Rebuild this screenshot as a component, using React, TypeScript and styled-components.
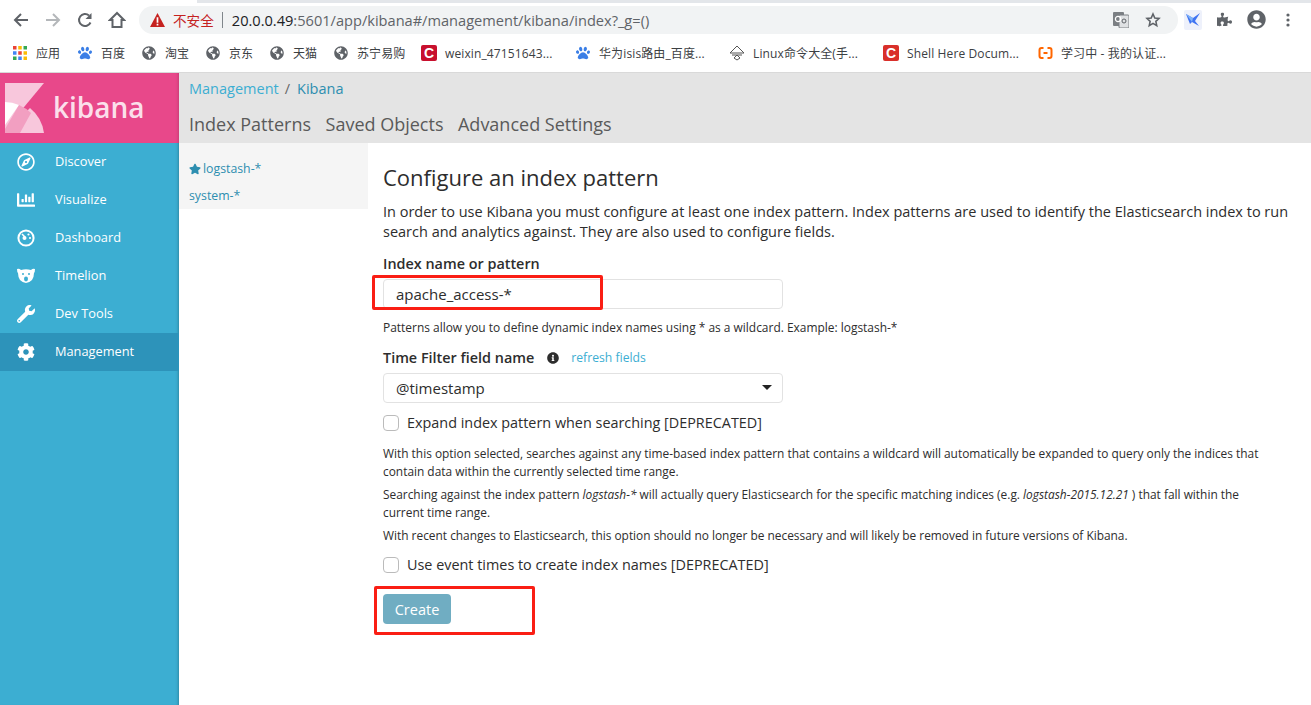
import React from "react";
import styled, { createGlobalStyle } from "styled-components";
import { FaRegCompass, FaChartBar, FaWrench, FaCog, FaStar, FaInfoCircle, FaPaw, FaGlobeAmericas, FaPuzzlePiece, FaUserCircle } from "react-icons/fa";

const Global = createGlobalStyle`
  html, body { margin: 0; padding: 0; background: #fff; overflow: hidden; }
  body { font-family: "Open Sans", "Noto Sans CJK SC", sans-serif; }
  * { box-sizing: border-box; }
`;
const Page = styled.div`width: 1311px; height: 705px; display: flex; flex-direction: column; overflow: hidden; position: relative;`;
const TabStrip = styled.div`height: 3px; background: #e3e6ea; display: flex;`;
const ActiveTab = styled.div`width: 197px; background: #fff;`;
const Toolbar = styled.div`height: 33px; display: flex; align-items: center; padding-left: 5px; background: #fff;`;
const NavBtn = styled.div<{ $w?: number }>`width: ${p => p.$w ?? 32}px; height: 24px; display: flex; align-items: center; justify-content: center; flex: none;`;
const Nav = styled.div`display: flex; width: 134px; flex: none;`;
const Omni = styled.div`width: 1039px; height: 28px; border-radius: 14px; background: #f1f3f4; display: flex; align-items: center; padding-left: 11px; flex: none; margin-top: 1px;`;
const Warn = styled.span`color: #c5221f; font-size: 13.6px; margin-left: 8px; font-family: "Noto Sans CJK SC", sans-serif; white-space: nowrap;`;
const Divider = styled.span`width: 1px; height: 16px; background: #80868b; margin: 0 9px 0 8px;`;
const Url = styled.span`font-size: 14.6px; color: #5f6368; white-space: nowrap; font-family: "Open Sans", sans-serif;`;
const UrlHost = styled.span`color: #202124;`;
const OmniRight = styled.div`margin-left: auto; display: flex; align-items: center; gap: 16px; padding-right: 17px;`;
const Tools = styled.div`display: flex; align-items: center; padding-left: 6px; gap: 15px;`;
const Bookmarks = styled.div`height: 37px; display: flex; align-items: center; padding: 0 0 2px 12px; background: #fff; border-bottom: 1px solid #d9d9d9;`;
const Bookmark = styled.div<{ $w: number }>`width: ${p => p.$w}px; flex: none; display: flex; align-items: center; gap: 8px; font-size: 12px; letter-spacing: .12px; color: #3c4043; white-space: nowrap; font-family: "Open Sans", "Noto Sans CJK SC", sans-serif;`;
const BmIcon = styled.span`width: 16px; height: 16px; display: flex; align-items: center; justify-content: center; flex: none;`;
const Tile = styled.span<{ $c: string }>`width: 16px; height: 16px; background: ${p => p.$c}; color: #fff; border-radius: 2px; font: bold 14px/16px "Liberation Sans", sans-serif; text-align: center;`;

const AppBody = styled.div`flex: 1; display: flex; min-height: 0;`;
const Sidebar = styled.aside`width: 179px; flex: none; background: #3caed2; display: flex; flex-direction: column; box-shadow: inset -3px 0 3px -2px rgba(0,0,0,.22);`;
const Logo = styled.div`height: 70px; background: #e8488a; display: flex; align-items: center; padding: 0 0 2px 5px; gap: 9px; color: #fbdfeb; font-size: 28px; font-weight: 600; box-shadow: inset -3px 0 3px -2px rgba(0,0,0,.15);`;
const LogoMark = styled.span`display: flex; margin-top: 2px;`;
const NavItem = styled.div<{ $active?: boolean }>`height: 38px; display: flex; align-items: center; padding: 0 0 2px 17px; gap: 20px; color: #fff; font-size: 12.8px; background: ${p => p.$active ? "#2d93ba" : "transparent"};`;
const NavGlyph = styled.span`width: 18px; height: 18px; display: flex; align-items: center; justify-content: center; flex: none; font-size: 18px; margin-top: 2px;`;

const Main = styled.main`flex: 1; display: flex; flex-direction: column; min-width: 0;`;
const TopBar = styled.div`height: 70px; background: #e4e4e4; padding: 6px 10px 0; display: flex; flex-direction: column;`;
const Crumbs = styled.div`font-size: 14.5px; line-height: 20px; color: #3caed2; display: flex; gap: 6px;`;
const CrumbSep = styled.span`color: #666; margin-right: 1px;`;
const CrumbCurrent = styled.span`color: #2d8eb0;`;
const Tabs = styled.div`display: flex; gap: 14.5px; font-size: 18px; line-height: 24px; color: #5a5a5a; margin-top: 13px;`;
const Split = styled.div`flex: 1; display: flex; min-height: 0;`;
const Patterns = styled.div`width: 189px; flex: none; height: 66px; background: #f5f5f5; padding: 17px 10px 0; font-size: 12.3px; color: #2d8eb0; display: flex; flex-direction: column; gap: 9px;`;
const PatternRow = styled.div`display: flex; align-items: center; gap: 2px; line-height: 18px;`;
const Content = styled.div`flex: 1; padding: 19px 15px 0; color: #2d2d2d; min-width: 0;`;
const Title = styled.h1`margin: 0; font-size: 22px; font-weight: 400; line-height: 30px; color: #2d2d2d;`;
const Lead = styled.p`margin: 10px 0 0; font-size: 14.5px; line-height: 20px; width: 915px;`;
const Label = styled.label`display: flex; align-items: center; font-size: 14.4px; font-weight: 600; line-height: 20px; color: #2d2d2d;`;
const NameLabel = styled(Label)`margin-top: 12px;`;
const Field = styled.div`width: 400px; height: 30px; border: 1px solid #e2e2e2; border-radius: 4px; margin-top: 5px; padding: 0 10px 1px 12px; display: flex; align-items: center; justify-content: space-between; font-size: 15px; color: #2d2d2d;`;
const Help = styled.div`font-size: 11.95px; line-height: 16px; margin-top: 11px; color: #2d2d2d;`;
const TimeLabel = styled(Label)`margin-top: 12px;`;
const Info = styled.span`margin-left: 13px; display: flex; color: #2d2d2d;`;
const Refresh = styled.span`margin-left: 12px; color: #3caed2; font-size: 12.2px; font-weight: 400;`;
const Caret = styled.span`width: 0; height: 0; border-left: 5px solid transparent; border-right: 5px solid transparent; border-top: 5px solid #222;`;
const Check = styled.div<{ $mt: number }>`display: flex; align-items: center; gap: 8px; font-size: 14.4px; line-height: 20px; margin-top: ${p => p.$mt}px;`;
const Box = styled.span`width: 16px; height: 16px; border: 1px solid #bbb; border-radius: 4px; background: #fff;`;
const Note = styled.p<{ $mt: number }>`margin: ${p => p.$mt}px 0 0; font-size: 11.9px; line-height: 18px; width: 885px;`;
const Create = styled.button`display: block; margin-top: 19px; width: 68px; height: 30px; background: #70adc2; border: 0; border-radius: 4px; color: #fff; font: 14.5px "Open Sans", sans-serif; padding: 0;`;
const Mark = styled.div<{ $x: number; $y: number; $w: number; $h: number }>`position: absolute; left: ${p => p.$x}px; top: ${p => p.$y}px; width: ${p => p.$w}px; height: ${p => p.$h}px; border: 3px solid #fa1e14; border-radius: 2px;`;

const Back = () => <svg width="18" height="18" viewBox="0 0 18 18" fill="none" stroke="#5f6368" strokeWidth="2"><path d="M16 9H3M9 3 3 9l6 6" /></svg>;
const Forward = () => <svg width="18" height="18" viewBox="0 0 18 18" fill="none" stroke="#b4b7ba" strokeWidth="2"><path d="M2 9h13M9 3l6 6-6 6" /></svg>;
const Reload = () => <svg width="16" height="16" viewBox="0 0 16 16" fill="none" stroke="#5f6368" strokeWidth="2"><path d="M13.5 10.5A6 6 0 1 1 12 3.5" /><path d="M14.5 1v6h-6z" fill="#5f6368" stroke="none" /></svg>;
const Home = () => <svg width="18" height="18" viewBox="0 0 18 18" fill="none" stroke="#5f6368" strokeWidth="2"><path d="M9 2 2 9h2.500v7h9V9H16z" /></svg>;
const Triangle = () => <svg width="15" height="14" viewBox="0 0 14 13"><path d="M7 0 14 13H0z" fill="#c5221f" /><path d="M6.200 4h1.600v5H6.200zM6.200 10h1.600v1.600H6.200z" fill="#fff" /></svg>;
const Translate = () => <svg width="16" height="16" viewBox="0 0 16 16"><rect x="0" y="0" width="11" height="14" rx="1" fill="#7b7f83" /><rect x="6" y="3" width="10" height="13" rx="1" fill="#dfe1e3" stroke="#7b7f83" /><circle cx="5" cy="7" r="2.600" fill="none" stroke="#fff" strokeWidth="1.200" /><circle cx="11" cy="9" r="2" fill="none" stroke="#5f6368" /></svg>;
const Star = () => <svg width="16" height="16" viewBox="0 0 24 24" fill="none" stroke="#5f6368" strokeWidth="2.400"><path d="m12 3 2.700 6 6.300.7-4.700 4.300 1.300 6.400L12 17l-5.600 3.400 1.300-6.400L3 9.700 9.300 9z" /></svg>;
const Ext = () => <svg width="18" height="20" viewBox="0 0 18 20"><rect width="18" height="20" rx="2" fill="#eef1fb" /><path d="M2 4 9 8 16 3 11 11 15 16 8 12 6 14z" fill="#3f73f2" /><path d="M2 4 9 8 8 12z" fill="#7fb4f8" /></svg>;
const Dots = () => <svg width="4" height="14" viewBox="0 0 4 14" fill="#5f6368"><circle cx="2" cy="2" r="1.600" /><circle cx="2" cy="7" r="1.600" /><circle cx="2" cy="12" r="1.600" /></svg>;
const Apps = () => {
  const colors = ["#ea4335", "#fbbc04", "#34a853", "#4285f4", "#ea4335", "#fbbc04", "#34a853", "#4285f4", "#fbbc04"];
  return <svg width="14" height="14" viewBox="0 0 12 12">{colors.map((c, i) => <rect key={i} x={(i % 3) * 4.5} y={Math.floor(i / 3) * 4.5} width="3" height="3" fill={c} />)}</svg>;
};
const Diamond = () => <svg width="16" height="16" viewBox="0 0 16 16" fill="none" stroke="#555"><path d="M8 1 15 8H1zM3 10h10M8 10l3 3-3 2-3-2z" /></svg>;
const CsdnOrange = () => <svg width="15" height="12" viewBox="0 0 14 12" fill="none" stroke="#f60" strokeWidth="2"><path d="M5 1H3Q1 1 1 3v6q0 2 2 2h2M9 1h2q2 0 2 2v6q0 2-2 2H9M5 6h4" /></svg>;
const KibanaLogo = () => <svg width="39" height="50" viewBox="0 0 39 50"><path d="M0 0h39L0 47z" fill="#f8c7dc" /><path d="M0 19a39 39 0 0 1 14 3L0 42z" fill="#fff" /><path d="M0 50h39A39 39 0 0 0 25 25z" fill="#f8c7dc" /><path d="M14 22q7 3 12 8L15 50H0V46z" fill="#f29fc1" /></svg>;
const Bear = () => <svg width="18" height="16" viewBox="0 0 18 16" fill="#fff"><path d="M0 1q2-1 4 1 5-1.500 10 0 2-2 4-1 0 3-1 4 0 4-2 7-3 3-6 3t-6-3Q1 9 1 5 0 4 0 1z" /><circle cx="6" cy="6" r="1" fill="#3caed2" /><circle cx="12" cy="6" r="1" fill="#3caed2" /><ellipse cx="9" cy="11" rx="2" ry="2.400" fill="#3caed2" /></svg>;
const Gauge = () => <svg width="18" height="18" viewBox="0 0 18 18" fill="none"><circle cx="9" cy="9" r="7.600" stroke="#fff" strokeWidth="2" /><circle cx="7.500" cy="9" r="2" fill="#fff" /><circle cx="11.500" cy="5.500" r="1.100" fill="#fff" /><circle cx="13" cy="9" r="1.100" fill="#fff" /><path d="m5 5 3 3" stroke="#fff" strokeWidth="1.500" /></svg>;

const Paw = () => <FaPaw size={14} color="#3a7ee6" />;
const Globe = () => <FaGlobeAmericas size={14} color="#5f6368" />;

const bookmarks: [number, React.ReactNode, string][] = [
  [65, <Apps />, "应用"], [64, <Paw />, "百度"], [64, <Globe />, "淘宝"], [64, <Globe />, "京东"], [64, <Globe />, "天猫"],
  [88, <Globe />, "苏宁易购"], [154, <Tile $c="#c8102e">C</Tile>, "weixin_47151643..."], [154, <Paw />, "华为isis路由_百度..."],
  [154, <Diamond />, "Linux命令大全(手..."], [154, <Tile $c="#d9302a">C</Tile>, "Shell Here Docum..."], [150, <CsdnOrange />, "学习中 - 我的认证..."],
];

const navItems: [React.ReactNode, string][] = [
  [<FaRegCompass />, "Discover"], [<FaChartBar />, "Visualize"], [<Gauge />, "Dashboard"], [<Bear />, "Timelion"], [<FaWrench />, "Dev Tools"], [<FaCog />, "Management"],
];

export default function App() {
  return (
    <Page>
      <Global />
      <TabStrip><ActiveTab /></TabStrip>
      <Toolbar>
        <Nav>
          <NavBtn><Back /></NavBtn><NavBtn><Forward /></NavBtn><NavBtn><Reload /></NavBtn><NavBtn><Home /></NavBtn>
        </Nav>
        <Omni>
          <Triangle /><Warn>不安全</Warn><Divider />
          <Url><UrlHost>20.0.0.49</UrlHost>:5601/app/kibana#/management/kibana/index?_g=()</Url>
          <OmniRight><Translate /><Star /></OmniRight>
        </Omni>
        <Tools>
          <Ext /><FaPuzzlePiece size={15} color="#5f6368" /><FaUserCircle size={19} color="#5f6368" /><NavBtn $w={14}><Dots /></NavBtn>
        </Tools>
      </Toolbar>
      <Bookmarks>
        {bookmarks.map(([w, icon, text]) => (
          <Bookmark key={text} $w={w}><BmIcon>{icon}</BmIcon>{text}</Bookmark>
        ))}
      </Bookmarks>
      <AppBody>
        <Sidebar>
          <Logo><LogoMark><KibanaLogo /></LogoMark>kibana</Logo>
          {navItems.map(([icon, text]) => (
            <NavItem key={text} $active={text === "Management"}><NavGlyph>{icon}</NavGlyph>{text}</NavItem>
          ))}
        </Sidebar>
        <Main>
          <TopBar>
            <Crumbs><span>Management</span><CrumbSep>/</CrumbSep><CrumbCurrent>Kibana</CrumbCurrent></Crumbs>
            <Tabs><span>Index Patterns</span><span>Saved Objects</span><span>Advanced Settings</span></Tabs>
          </TopBar>
          <Split>
            <Patterns>
              <PatternRow><FaStar size={12} />logstash-*</PatternRow>
              <PatternRow>system-*</PatternRow>
            </Patterns>
            <Content>
              <Title>Configure an index pattern</Title>
              <Lead>In order to use Kibana you must configure at least one index pattern. Index patterns are used to identify the Elasticsearch index to run search and analytics against. They are also used to configure fields.</Lead>
              <NameLabel>Index name or pattern</NameLabel>
              <Field>apache_access-*</Field>
              <Help>Patterns allow you to define dynamic index names using * as a wildcard. Example: logstash-*</Help>
              <TimeLabel>Time Filter field name<Info><FaInfoCircle size={12} /></Info><Refresh>refresh fields</Refresh></TimeLabel>
              <Field>@timestamp<Caret /></Field>
              <Check $mt={10}><Box />Expand index pattern when searching [DEPRECATED]</Check>
              <Note $mt={11}>With this option selected, searches against any time-based index pattern that contains a wildcard will automatically be expanded to query only the indices that contain data within the currently selected time range.</Note>
              <Note $mt={5}>Searching against the index pattern <i>logstash-*</i> will actually query Elasticsearch for the specific matching indices (e.g. <i>logstash-2015.12.21</i> ) that fall within the current time range.</Note>
              <Note $mt={5}>With recent changes to Elasticsearch, this option should no longer be necessary and will likely be removed in future versions of Kibana.</Note>
              <Check $mt={11}><Box />Use event times to create index names [DEPRECATED]</Check>
              <Create>Create</Create>
            </Content>
          </Split>
        </Main>
      </AppBody>
      <Mark $x={372} $y={275} $w={231} $h={35} />
      <Mark $x={374} $y={586} $w={161} $h={49} />
    </Page>
  );
}
